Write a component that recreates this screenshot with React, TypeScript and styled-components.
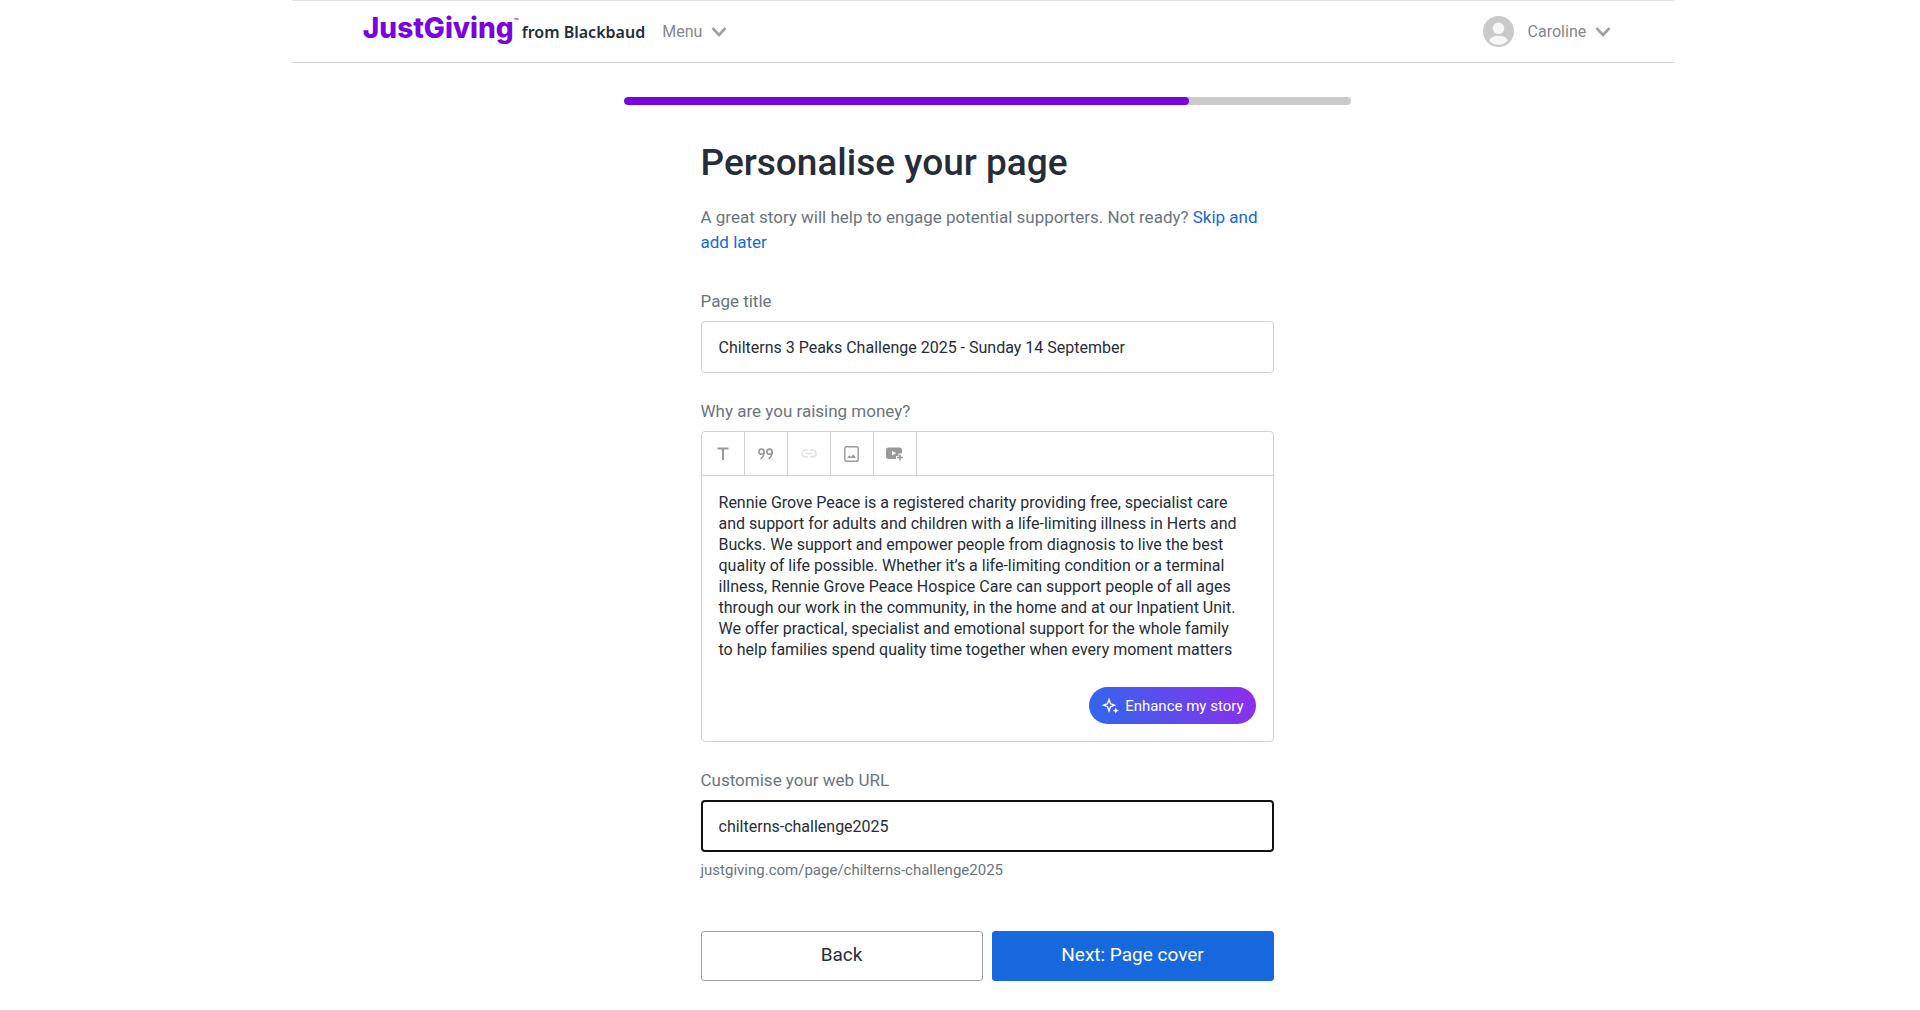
import React, { useState } from "react";
import styled, { createGlobalStyle } from "styled-components";

const color = {
  purple: "#7a04dd",
  ink: "#262d39",
  muted: "#6b747e",
  grey: "#85888c",
  line: "#d0d1d3",
  blue: "#1768dc",
};

const GlobalStyle = createGlobalStyle`
  *, *::before, *::after { box-sizing: border-box; }
  body {
    margin: 0;
    background: #fff;
    color: ${color.ink};
    font-family: Roboto, "Liberation Sans", sans-serif;
    font-size: 16px;
  }
  button, input, textarea { font: inherit; color: inherit; }
  button { cursor: pointer; }
`;

const Page = styled.div`
  width: 72%;
  margin-left: 15.2%;
`;

const Header = styled.header`
  display: flex;
  align-items: center;
  justify-content: space-between;
  height: 63px;
  padding: 0 63px 0 71px;
  border-top: 1px solid #e3e3e5;
  border-bottom: 1px solid ${color.line};
`;

const HeaderGroup = styled.div`
  display: flex;
  align-items: center;
`;

const Brand = styled.a`
  display: flex;
  align-items: baseline;
  margin-right: 17px;
  padding-bottom: 8px;
  color: ${color.ink};
  text-decoration: none;
`;

const Wordmark = styled.span`
  color: ${color.purple};
  font: 800 28px/36px Inter, sans-serif;
`;

const TradeMark = styled.sup`
  align-self: flex-start;
  margin-right: 3px;
  color: ${color.purple};
  font-size: 8px;
  line-height: 24px;
`;

const Parent = styled.span`
  font: 600 16px/24px "Noto Sans", sans-serif;
`;

const MenuButton = styled.button`
  display: flex;
  align-items: center;
  gap: 9px;
  padding: 0;
  border: 0;
  background: none;
  color: ${color.grey};
`;

const Avatar = styled.svg`
  width: 31px;
  height: 31px;
  margin-right: 5px;
`;

const Content = styled.div`
  display: flex;
  justify-content: center;
  padding: 34px 0 0 8px;
`;

const Main = styled.main`
  flex: 0 1 727px;
`;

const Progress = styled.div`
  height: 8px;
  border-radius: 4px;
  background: #cacaca;
  overflow: hidden;
`;

const ProgressFill = styled.div<{ $share: number }>`
  width: ${(p) => p.$share}%;
  height: 100%;
  border-radius: 4px;
  background: ${color.purple};
`;

const Form = styled.form`
  margin: 0 77px;
  padding-top: 34px;
`;

const Title = styled.h1`
  margin: 0;
  font-size: 37px;
  line-height: 48px;
  font-weight: 500;
`;

const Intro = styled.p`
  margin: 18px 0 34px;
  color: ${color.muted};
  font-size: 17px;
  line-height: 25px;
`;

const TextLink = styled.a`
  color: ${color.blue};
  text-decoration: none;
`;

const Field = styled.div`
  margin-bottom: 26px;
`;

const Label = styled.label`
  display: block;
  margin-bottom: 8px;
  color: ${color.muted};
  font-size: 17px;
  line-height: 24px;
`;

const TextInput = styled.input`
  display: block;
  width: 100%;
  height: 52px;
  padding: 0 17px;
  border: 1px solid ${color.line};
  border-radius: 4px;
  background: #fff;
  outline: 0;
`;

const FocusedInput = styled(TextInput)`
  padding: 0 16px;
  border: 2px solid #111215;
`;

const Hint = styled.p`
  margin: 8px 0 0;
  color: ${color.muted};
  font-size: 15px;
  line-height: 20px;
`;

const Editor = styled.div`
  border: 1px solid ${color.line};
  border-radius: 4px;
`;

const Toolbar = styled.div`
  display: flex;
  height: 44px;
  border-bottom: 1px solid ${color.line};
`;

const Tool = styled.button`
  display: grid;
  place-items: center;
  width: 43px;
  padding: 0;
  border: 0;
  border-right: 1px solid ${color.line};
  background: none;
  color: #98999b;
  &:disabled { color: #dfdfe0; }
`;

const Story = styled.textarea`
  display: block;
  width: 100%;
  height: 192px;
  padding: 16px 30px 0 17px;
  border: 0;
  outline: 0;
  resize: none;
  overflow: hidden;
  background: none;
  line-height: 21px;
`;

const EditorFoot = styled.div`
  display: flex;
  justify-content: flex-end;
  padding: 19px 17px 17px;
`;

const EnhanceButton = styled.button`
  display: flex;
  align-items: center;
  gap: 5px;
  height: 37px;
  padding: 0 12px 0 13px;
  border: 0;
  border-radius: 19px;
  background: linear-gradient(70deg, #2f68ee, #8f2dec);
  color: #fff;
  font-size: 15px;
`;

const Actions = styled.div`
  display: grid;
  grid-template-columns: 1fr 1fr;
  gap: 9px;
  margin-top: 51px;
`;

const ActionButton = styled.button<{ $primary?: boolean }>`
  height: 50px;
  padding: 0 16px 3px;
  border: 1px solid ${(p) => (p.$primary ? color.blue : "#a0a1a3")};
  border-radius: 3px;
  background: ${(p) => (p.$primary ? color.blue : "#fff")};
  color: ${(p) => (p.$primary ? "#fff" : color.ink)};
  font-size: 19px;
`;

const Chevron = () => (
  <svg width="16" height="10" viewBox="0 0 16 10" fill="none" stroke="#a0a1a3" strokeWidth="2.6" aria-hidden="true">
    <path d="M1.5 1 8 8 14.5 1" />
  </svg>
);

const story =
  "Rennie Grove Peace is a registered charity providing free, specialist care and support for adults and children with a life-limiting illness in Herts and Bucks. We support and empower people from diagnosis to live the best quality of life possible. Whether it’s a life-limiting condition or a terminal illness, Rennie Grove Peace Hospice Care can support people of all ages through our work in the community, in the home and at our Inpatient Unit. We offer practical, specialist and emotional support for the whole family to help families spend quality time together when every moment matters";

const stepsDone = 7;
const stepsTotal = 9;

export default function App() {
  const [title, setTitle] = useState("Chilterns 3 Peaks Challenge 2025 - Sunday 14 September");
  const [text, setText] = useState(story);
  const [slug, setSlug] = useState("chilterns-challenge2025");

  return (
    <>
      <GlobalStyle />
      <Page>
        <Header>
          <HeaderGroup>
            <Brand href="#">
              <Wordmark>JustGiving</Wordmark>
              <TradeMark>™</TradeMark>
              <Parent>from Blackbaud</Parent>
            </Brand>
            <MenuButton type="button">
              Menu <Chevron />
            </MenuButton>
          </HeaderGroup>
          <MenuButton type="button">
            <Avatar viewBox="0 0 31 31" aria-hidden="true">
              <circle cx="15.5" cy="15.5" r="15.5" fill="#cacaca" />
              <circle cx="15.5" cy="12.3" r="5.8" fill="#f7f7f7" />
              <path d="M6 24.2C8 21 11.5 19.8 15.5 19.8S23 21 25 24.2C22.5 27.4 19 28.7 15.5 28.7S8.500 27.400 6 24.200Z" fill="#f7f7f7" />
            </Avatar>
            Caroline <Chevron />
          </MenuButton>
        </Header>
        <Content>
          <Main>
            <Progress role="progressbar" aria-valuenow={stepsDone} aria-valuemin={0} aria-valuemax={stepsTotal}>
              <ProgressFill $share={(stepsDone / stepsTotal) * 100} />
            </Progress>
            <Form onSubmit={(e) => e.preventDefault()}>
              <Title>Personalise your page</Title>
              <Intro>
                A great story will help to engage potential supporters. Not ready?{" "}
                <TextLink href="#">Skip and add later</TextLink>
              </Intro>
              <Field>
                <Label htmlFor="title">Page title</Label>
                <TextInput id="title" value={title} onChange={(e) => setTitle(e.target.value)} />
              </Field>
              <Field>
                <Label htmlFor="story">Why are you raising money?</Label>
                <Editor>
                  <Toolbar>
                    <Tool type="button" aria-label="Heading">
                      <svg width="12" height="13" viewBox="0 0 12 13" fill="none" stroke="currentColor" strokeWidth="2">
                        <path d="M.5 1.5H11.5M6 1.5V13" />
                      </svg>
                    </Tool>
                    <Tool type="button" aria-label="Quote">
                      <svg width="15" height="12" viewBox="0 0 15 12" fill="none" stroke="currentColor" strokeWidth="1.6">
                        <circle cx="3.5" cy="3.7" r="2.6" />
                        <path d="M6.1 3.7C6.3 7 4.8 9.3 2.6 10.9" />
                        <circle cx="11.5" cy="3.7" r="2.6" />
                        <path d="M14.1 3.7C14.3 7 12.8 9.3 10.6 10.9" />
                      </svg>
                    </Tool>
                    <Tool type="button" aria-label="Link" disabled>
                      <svg width="16" height="9" viewBox="0 0 16 9" fill="none" stroke="currentColor" strokeWidth="1.5">
                        <path d="M7 1H4.5A3.5 3.5 0 0 0 4.5 8H7M9 1H11.5A3.5 3.5 0 0 1 11.5 8H9M5 4.5H11" />
                      </svg>
                    </Tool>
                    <Tool type="button" aria-label="Image">
                      <svg width="15" height="16" viewBox="0 0 15 16" fill="none" stroke="currentColor" strokeWidth="1.4">
                        <rect x=".8" y=".8" width="13.4" height="14.4" rx="1.8" />
                        <path d="M3.2 12 5.3 9.3 7 11 9.3 8.3 12 12Z" fill="currentColor" stroke="none" />
                      </svg>
                    </Tool>
                    <Tool type="button" aria-label="Video">
                      <svg width="17" height="14" viewBox="0 0 17 14">
                        <path d="M2.5.5H13.5Q16 .5 16 3V6.5H12.5V9H10V12H2.5Q0 12 0 9.5V3Q0 .5 2.5.5Z" fill="currentColor" />
                        <path d="M6 3.8 10 6.2 6 8.6Z" fill="#fff" />
                        <path d="M14 7.5V13.5M11 10.5H17" stroke="currentColor" strokeWidth="1.5" />
                      </svg>
                    </Tool>
                  </Toolbar>
                  <Story id="story" value={text} onChange={(e) => setText(e.target.value)} />
                  <EditorFoot>
                    <EnhanceButton type="button">
                      <svg width="18" height="16" viewBox="0 0 18 16" fill="none" stroke="#fff" strokeWidth="1.3" aria-hidden="true">
                        <path d="M7 1.5 8.5 5.7 12.5 7.2 8.5 8.7 7 13 5.5 8.7 1.5 7.2 5.5 5.7Z" />
                        <path d="M13.8 9.5 14.7 11.7 17 12.6 14.7 13.5 13.8 15.7 12.9 13.5 10.6 12.6 12.9 11.7Z" fill="#fff" stroke="none" />
                      </svg>
                      Enhance my story
                    </EnhanceButton>
                  </EditorFoot>
                </Editor>
              </Field>
              <Field>
                <Label htmlFor="slug">Customise your web URL</Label>
                <FocusedInput id="slug" value={slug} onChange={(e) => setSlug(e.target.value)} />
                <Hint>justgiving.com/page/{slug}</Hint>
              </Field>
              <Actions>
                <ActionButton type="button">Back</ActionButton>
                <ActionButton type="submit" $primary>Next: Page cover</ActionButton>
              </Actions>
            </Form>
          </Main>
        </Content>
      </Page>
    </>
  );
}
